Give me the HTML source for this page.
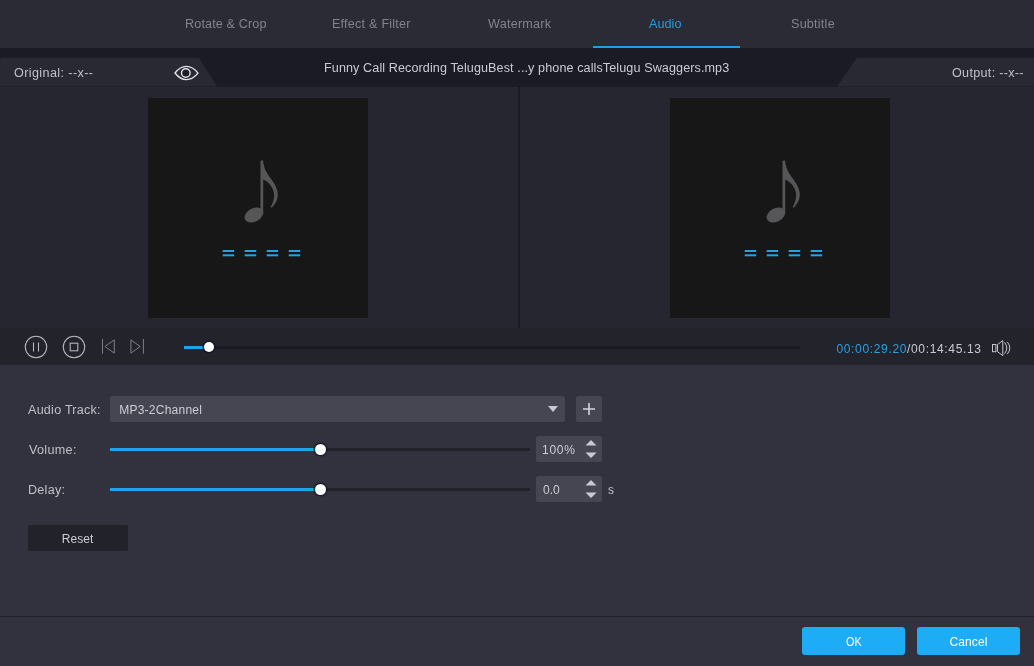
<!DOCTYPE html>
<html><head><meta charset="utf-8">
<style>
*{box-sizing:border-box;margin:0;padding:0}
html,body{width:1034px;height:666px;overflow:hidden;background:#32323e;font-family:"Liberation Sans","DejaVu Sans",sans-serif;font-size:13px;color:#c0c0c8}
.abs{position:absolute}
#root{will-change:transform;position:relative;width:1034px;height:666px;overflow:hidden;background:#32323e}
#tabbar{left:0;top:0;width:1034px;height:48px;background:#2b2b36}
.tab{position:absolute;top:0;height:48px;width:147px;text-align:center;line-height:47px;color:#83838e;font-size:13px;white-space:nowrap}
.tab.on{color:#1e9fe3}
.tab.on:after{content:"";position:absolute;left:0;right:0;bottom:0;height:2px;background:#1e9fe3}
#band{left:0;top:48px;width:1034px;height:39px;background:#1b1b26}
#preview{left:0;top:86.5px;width:1034px;height:241.5px;background:#262630}
#divider{left:518.1px;top:86px;width:1.9px;height:243.5px;background:#1a1a24}
.box{position:absolute;top:98px;width:220px;height:220px;background:#171717}
#ctrl{left:0;top:328px;width:1034px;height:37px;background:#23232c}
.t{position:absolute;white-space:nowrap;line-height:16px;font-size:12px}
.tb{color:#83838e}
.sx{transform:scaleX(1.05);transform-origin:0 0}
.inp{position:absolute;background:#464653;border-radius:2px}
.trk{position:absolute;height:3px;background:#22222b}
.fill{position:absolute;height:3px;background:#1ea5e8}
.knob{position:absolute;width:11px;height:11px;border-radius:50%;background:#fff;box-shadow:0 0 0 1.5px rgba(22,22,30,.75)}
.btn{position:absolute;top:627px;height:28px;width:103px;background:#1cadf6;border-radius:3px;color:#fff;text-align:center;line-height:28px;font-size:13px}
</style></head><body>
<div id="root">
<div id="tabbar" class="abs"></div>
<div class="abs" style="left:593px;top:46px;width:147px;height:2px;background:#1e9fe3"></div>
<div class="t tb sx" id="t_tab1" style="left:184.6px;top:16px;letter-spacing:0.13px">Rotate &amp; Crop</div>
<div class="t tb sx" id="t_tab2" style="left:332.0px;top:16px;letter-spacing:0.21px">Effect &amp; Filter</div>
<div class="t tb sx" id="t_tab3" style="left:487.8px;top:16px;letter-spacing:0.23px">Watermark</div>
<div class="t tb sx" id="t_tab4" style="left:649.4px;top:16px;color:#1e9fe3;letter-spacing:0.04px">Audio</div>
<div class="t tb sx" id="t_tab5" style="left:791.2px;top:16px;letter-spacing:0.22px">Subtitle</div>
<div id="band" class="abs"></div>
<div id="preview" class="abs"></div>
<svg class="abs" style="left:0;top:48px" width="1034" height="39" viewBox="0 0 1034 39">
 <path d="M0 38.5V12Q0 9.7 3 9.7H198.8L217.2 38.5Z" fill="#292934"/>
 <path d="M1034 38.5V9.7H856.8L837 38.5Z" fill="#292934"/>
</svg>
<div class="t sx" id="t_orig" style="left:13.8px;top:65px;letter-spacing:0.37px">Original: --x--</div>
<div class="t sx" id="t_out" style="left:952.4px;top:65px;letter-spacing:0.29px">Output: --x--</div>
<div class="t sx" id="t_title" style="left:324.2px;top:60px;color:#cbcbd3;letter-spacing:0.09px">Funny Call Recording TeluguBest ...y phone callsTelugu Swaggers.mp3</div>
<svg class="abs" style="left:172px;top:63px" width="28" height="20" viewBox="0 0 28 20">
 <path d="M3 10C6.6 5.4 10.6 3.4 14.4 3.4S22.2 5.4 26 10.1C22.2 14.7 18.2 16.6 14.4 16.6S6.6 14.6 3 10Z" fill="none" stroke="#e2e2ea" stroke-width="1.4" stroke-linejoin="round"/>
 <circle cx="13.8" cy="10" r="4.3" fill="#1f1f27" stroke="#e2e2ea" stroke-width="1.4"/>
</svg>
<div id="divider" class="abs"></div>
<div class="box" style="left:148px"></div>
<div class="box" style="left:670px"></div>
<svg class="abs" id="art" style="left:0;top:86px" width="1034" height="242" viewBox="0 86 1034 242">
 <defs>
  <g id="note" fill="#565658">
   <path d="M260.5 160.8 L263.1 160.6 C263.8 168 266 172 270 177.5 C275 184 279.6 191 277.2 199 C276.2 202.5 274 205.6 271.6 207.7 L270.6 207 C273 203 275.2 197 273.6 191.5 C272 186 267.5 181 263.2 179.6 L263.2 214 L260.5 214 Z"/>
   <ellipse cx="253.9" cy="215" rx="9.9" ry="6.7" transform="rotate(-27 253.9 215)"/>
  </g>
  <g id="dash" fill="#27a0e6">
   <rect x="222.7" y="250" width="11.5" height="2"/><rect x="222.7" y="254.3" width="11.5" height="2"/>
   <rect x="244.7" y="250" width="11.5" height="2"/><rect x="244.7" y="254.3" width="11.5" height="2"/>
   <rect x="266.7" y="250" width="11.5" height="2"/><rect x="266.7" y="254.3" width="11.5" height="2"/>
   <rect x="288.7" y="250" width="11.5" height="2"/><rect x="288.7" y="254.3" width="11.5" height="2"/>
  </g>
 </defs>
 <use href="#note"/><use href="#dash"/>
 <use href="#note" x="522"/><use href="#dash" x="522"/>
</svg>
<div id="ctrl" class="abs"></div>
<svg class="abs" style="left:0;top:328px" width="1034" height="37" viewBox="0 328 1034 37" fill="none">
 <g stroke="#b9b9c1" stroke-width="1.05">
  <circle cx="36" cy="347" r="10.7"/>
  <path d="M33.5 342.5V351.5M38.5 342.5V351.5"/>
  <circle cx="74" cy="347" r="10.7"/>
  <rect x="70.2" y="343.2" width="7.6" height="7.6"/>
 </g>
 <g stroke="#7e7e89" stroke-width="1">
  <path d="M102.5 339V353.8M114.3 339.9V353.1L104.9 346.5Z"/>
  <path d="M143.4 339V353.8M130.9 339.9V353.1L140.2 346.5Z"/>
 </g>
 <g stroke="#c4c4cc" stroke-width="1">
  <rect x="992.5" y="344.5" width="3.4" height="7.2"/>
  <path d="M997.5 344.5L1002.8 340.6V355.6L997.5 351.7Z"/>
  <path d="M1004.6 342.3Q1009 348 1004.6 353.7M1007.3 341.9Q1012.3 348 1007.3 354.1"/>
 </g>
</svg>
<div class="trk" style="left:184px;top:346px;width:616px;background:#1a1a22"></div>
<div class="fill" style="left:184px;top:346px;width:25px"></div>
<div class="knob" style="left:203.7px;top:341.6px;width:10.6px;height:10.6px"></div>
<div class="t" id="t_time" style="left:836.4px;top:341px;letter-spacing:0.66px"><span style="color:#2aa0e4">00:00:29.20</span><span style="color:#c9c9d1">/00:14:45.13</span></div>

<div class="t sx" id="t_at" style="left:28.2px;top:402px;letter-spacing:0.22px">Audio Track:</div>
<div class="inp" style="left:110px;top:396px;width:455px;height:26px"></div>
<div class="t" id="t_mp3" style="left:119.2px;top:402px;color:#cdcdd5;letter-spacing:0.24px">MP3-2Channel</div>
<svg class="abs" style="left:547px;top:405px" width="12" height="8" viewBox="0 0 12 8"><path d="M1 1H11L6 7Z" fill="#c9c9d1"/></svg>
<div class="inp" style="left:576px;top:396px;width:26px;height:26px"></div>
<svg class="abs" style="left:582px;top:402px" width="14" height="14" viewBox="0 0 14 14"><path d="M1 7H13M7 1V13" stroke="#d2d2da" stroke-width="1.6"/></svg>

<div class="t sx" id="t_vol" style="left:28.8px;top:442px;letter-spacing:0.30px">Volume:</div>
<div class="trk" style="left:110px;top:448px;width:420px"></div>
<div class="fill" style="left:110px;top:448px;width:210px"></div>
<div class="knob" style="left:314.7px;top:443.6px"></div>
<div class="inp" style="left:536px;top:436px;width:66px;height:26px"></div>
<div class="t" id="t_100" style="left:542.0px;top:442px;color:#cdcdd5;letter-spacing:0.73px">100%</div>
<svg class="abs" style="left:585px;top:439px" width="12" height="20" viewBox="0 0 12 20"><path d="M0.5 6.5H11.5L6 1Z M0.5 13.5H11.5L6 19Z" fill="#c9c9d1"/></svg>

<div class="t sx" id="t_del" style="left:27.8px;top:482px;letter-spacing:0.24px">Delay:</div>
<div class="trk" style="left:110px;top:488px;width:420px"></div>
<div class="fill" style="left:110px;top:488px;width:210px"></div>
<div class="knob" style="left:314.7px;top:483.6px"></div>
<div class="inp" style="left:536px;top:476px;width:66px;height:26px"></div>
<div class="t" id="t_00" style="left:543.0px;top:482px;color:#cdcdd5;letter-spacing:0.00px">0.0</div>
<svg class="abs" style="left:585px;top:479px" width="12" height="20" viewBox="0 0 12 20"><path d="M0.5 6.5H11.5L6 1Z M0.5 13.5H11.5L6 19Z" fill="#c9c9d1"/></svg>
<div class="t" id="t_s" style="left:608.0px;top:482px;letter-spacing:0.00px">s</div>

<div class="abs" style="left:28px;top:525px;width:100px;height:26px;background:#22222b;border-radius:2px"></div>
<div class="t" id="t_reset" style="left:61.8px;top:531px;color:#cdcdd5;letter-spacing:0.05px">Reset</div>

<div class="abs" style="left:0;top:616px;width:1034px;height:1px;background:#20202a"></div>
<div class="btn" style="left:802px"></div>
<div class="btn" style="left:917px"></div>
<div class="t" id="t_ok" style="left:845.5px;top:634px;color:#fff;letter-spacing:0.00px;transform:scaleX(0.9);transform-origin:0 0">OK</div>
<div class="t" id="t_cancel" style="left:949.4px;top:634px;color:#fff;letter-spacing:0.12px">Cancel</div>
</div>
</body></html>
